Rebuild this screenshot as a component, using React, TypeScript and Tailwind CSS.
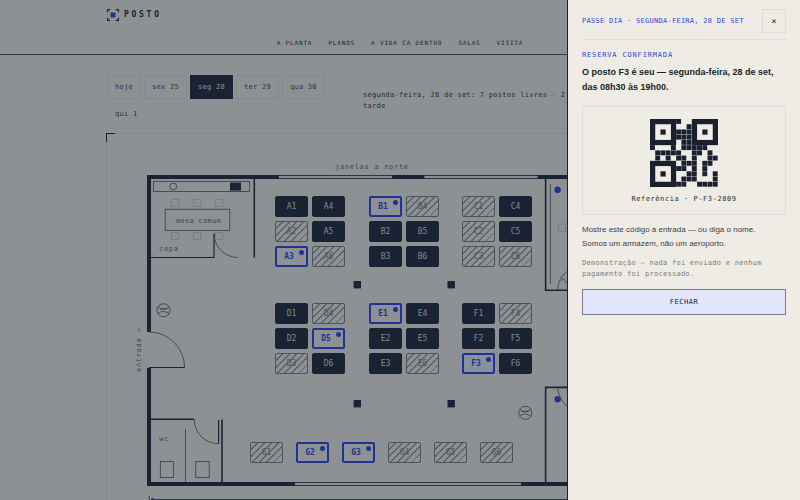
import React from "react";

type DeskState = "busy" | "free" | "partial";

const PLAN = { x: 107, y: 134, width: 586, height: 400 };

const days = ["hoje", "sex 25", "seg 28", "ter 29", "qua 30", "qui 1"];
const links = ["A PLANTA", "PLANOS", "A VIDA CÁ DENTRO", "SALAS", "VISITA"];

const free = ["A3", "B1", "D5", "E1", "F3", "G2", "G3"];
const partial = ["A2", "A6", "B4", "C1", "C2", "C3", "C6", "D3", "D4", "E6", "F4", "G1", "G4", "G5", "G6"];

const stateOf = (id: string): DeskState =>
  free.includes(id) ? "free" : partial.includes(id) ? "partial" : "busy";

const islands = [
  { name: "A", x: 275, y: 196 },
  { name: "B", x: 369, y: 196 },
  { name: "C", x: 462, y: 196 },
  { name: "D", x: 275, y: 303 },
  { name: "E", x: 369, y: 303 },
  { name: "F", x: 462, y: 303 },
];

const desks = [
  ...islands.flatMap((island) =>
    [0, 1, 2, 3, 4, 5].map((i) => ({
      id: `${island.name}${i + 1}`,
      x: island.x + (i > 2 ? 37 : 0),
      y: island.y + (i % 3) * 25,
    }))
  ),
  ...[0, 1, 2, 3, 4, 5].map((i) => ({ id: `G${i + 1}`, x: 250 + i * 46, y: 442 })),
];

const deskStyle: Record<DeskState, string> = {
  busy: "border bg-[#1a2338] border-[#1a2338] text-[#d9d9d6]",
  free: "border-2 border-[#2440e8] font-bold text-[#2440e8] pr-[5px]",
  partial:
    "border border-[#777a80] text-[#74777c] bg-[repeating-linear-gradient(135deg,transparent_0px,transparent_4px,#94979a_4px,#94979a_5px)]",
};

function Desk({ id, x, y }: { id: string; x: number; y: number }) {
  const state = stateOf(id);
  return (
    <button
      type="button"
      className={`absolute flex h-[21px] w-[33px] items-center justify-center rounded-[2px] text-[8px] leading-[9px] ${deskStyle[state]} ${id === "F3" ? "bg-[#e4e7fb]" : ""}`}
      style={{ left: x - PLAN.x, top: y - PLAN.y }}
    >
      {id}
      {state === "free" && <span className="absolute top-[2px] right-[2px] size-[5px] rounded-full bg-[#2440e8]" />}
    </button>
  );
}

function Plant({ x, y }: { x: number; y: number }) {
  return (
    <g transform={`translate(${x} ${y})`} stroke="#4a4e58" strokeWidth="0.8" fill="none">
      <circle r="6.6" />
      <path d="M-5.6 -3.4Q-3 -1 0 -1.2T5.6 -3.4M-5.6 3.4Q-3 1 0 1.2T5.6 3.4M-3.5 -1.4H3.5" />
    </g>
  );
}

function FloorPlan() {
  const ink = "#1a2338";
  return (
    <svg
      viewBox={`${PLAN.x} ${PLAN.y} ${PLAN.width} ${PLAN.height}`}
      width={PLAN.width}
      height={PLAN.height}
      fill="none"
      className="block"
      aria-hidden="true"
    >
      <path d="M149 332V177H690M149 368V484H690" stroke={ink} strokeWidth="4" />
      <g fill="#e4e2dc" stroke={ink} strokeWidth="0.7">
        <rect x="278.3" y="175.4" width="114" height="3.2" />
        <rect x="424" y="175.4" width="114" height="3.2" />
        <rect x="294.7" y="482.4" width="226.6" height="3.2" />
      </g>

      <g stroke={ink} strokeWidth="1.6">
        <path d="M254.3 178V257.5" />
        <path d="M151 257.5H214V233.5" strokeWidth="1.2" />
        <path d="M149 367.5H185" strokeWidth="1.2" />
        <path d="M151 419.3H194M222 419.5V483" />
        <path d="M218.6 420V443.7" strokeWidth="1.2" />
        <path d="M545.6 178V290.2H690M545.6 483V387.4H690" />
      </g>

      <g stroke="#4a4e58" strokeWidth="0.8">
        <path d="M214 234A24 24 0 0 0 238 257.5" />
        <path d="M149 332A35.5 35.5 0 0 1 184.6 367.5" />
        <path d="M194.3 419.5A24 24 0 0 0 218.5 443.6" />
        <rect x="153.5" y="181.4" width="96" height="10.2" />
        <circle cx="173.3" cy="186.5" r="3.4" />
        <rect x="165.2" y="209.2" width="64.6" height="21.2" />
        <path d="M185.5 429V482" />
        <rect x="160.3" y="461.6" width="13.2" height="16" />
        <rect x="195.8" y="461.6" width="13.4" height="16" />
        <path d="M550.4 184V284" />
        <path d="M557.6 290Q558 278 567 271.5M557.6 388Q559 400 568 407" />
        <path d="M561 281Q563 277 565 281T568 282" />
      </g>

      <g stroke="#bcbbb6" strokeWidth="0.7">
        {[171.3, 193.3, 215.3].map((x) => (
          <React.Fragment key={x}>
            <rect x={x} y="199.3" width="7.6" height="7" />
            <rect x={x} y="232.6" width="7.6" height="7" />
          </React.Fragment>
        ))}
        <rect x="558.6" y="224" width="7" height="7.6" />
      </g>

      <rect x="230" y="182.6" width="11" height="8" fill={ink} />
      <g fill={ink}>
        <rect x="353.6" y="281" width="7.4" height="7.4" />
        <rect x="447.5" y="281" width="7.4" height="7.4" />
        <rect x="353.6" y="400" width="7.4" height="7.4" />
        <rect x="447.5" y="400" width="7.4" height="7.4" />
      </g>
      <circle cx="557.6" cy="189.7" r="3.2" fill="#2440e8" />
      <circle cx="557.6" cy="399.3" r="3.2" fill="#2440e8" />

      <Plant x={163.5} y={310.3} />
      <Plant x={525.3} y={412.8} />

      <path d="M149.3 496V503M151 499.5H680M154 498L151 499.5L154 501" stroke={ink} strokeWidth="0.8" />

      <g fill="#5a5d66" className="text-[7px] tracking-widest">
        <text x="335" y="169">janelas a norte</text>
        <text x="159" y="251">copa</text>
        <text x="159" y="441">wc</text>
        <text x="176" y="223" className="tracking-[0.04em]">mesa comum</text>
        <text transform="translate(141 372) rotate(-90)">entrada →</text>
      </g>
    </svg>
  );
}

const qr = [
  "111111..11111",
  "1...1..11...1",
  "1.1.11111.1.1",
  "1...11111...1",
  "11111.1111111",
  "1...1.11111..",
  ".11111..11.1.",
  ".1.1.11.1..11",
  "11111.111.11.",
  "1...111.1.1..",
  "1.1.1..11.1.1",
  "1...1.111...1",
  "1111111..1111",
];

const finders = [
  [0, 0],
  [8, 0],
  [0, 8],
];

function QrCode() {
  return (
    <svg viewBox="0 0 13 13" className="size-[68px]" fill="#1a2030" role="img" aria-label="P-F3-2809">
      {qr.flatMap((row, y) =>
        [...row].map((cell, x) => {
          const finder = finders.some(([fx, fy]) => x >= fx && x < fx + 5 && y >= fy && y < fy + 5);
          if (cell !== "1" || finder) return null;
          return <rect key={`${x}-${y}`} x={x} y={y} width="0.94" height="0.94" />;
        })
      )}
      {finders.map(([x, y]) => (
        <g key={`${x}-${y}`}>
          <rect x={x + 0.5} y={y + 0.5} width="4" height="4" fill="#f3ece6" stroke="#1a2030" />
          <rect x={x + 2} y={y + 2} width="1" height="1" />
        </g>
      ))}
    </svg>
  );
}

function Drawer() {
  return (
    <aside
      role="dialog"
      aria-labelledby="pass-title"
      className="fixed inset-y-0 right-0 flex w-[233px] flex-col border-l border-[#1a2030] bg-[#efece5] px-3.5 pt-[9px]"
    >
      <header className="flex items-center justify-between border-b border-[#dedcd6] pb-1.5">
        <p className="font-[DejaVu_Sans_Mono,monospace] text-[7px] tracking-[0.04em] text-[#2f48e0]">
          PASSE DIA · SEGUNDA-FEIRA, 28 DE SET
        </p>
        <button type="button" className="size-6 border border-[#dedcd6] text-[9px] leading-none text-[#1a2030]">
          <span className="font-[DejaVu_Sans_Mono,monospace]">×</span>
        </button>
      </header>
      <p className="mt-2.5 font-[DejaVu_Sans_Mono,monospace] text-[7px] leading-[10px] tracking-[0.12em] text-[#2f48e0]">
        RESERVA CONFIRMADA
      </p>
      <h2 id="pass-title" className="mt-[5px] text-[9px] leading-[15px] font-bold text-[#1a1f2a]">
        O posto F3 é seu — segunda-feira, 28 de set,
        <br />
        das 08h30 às 19h00.
      </h2>
      <figure className="mt-[11px] flex flex-col items-center gap-[7px] border border-[#dedcd6] pt-3 pb-[10px]">
        <QrCode />
        <figcaption className="font-[DejaVu_Sans_Mono,monospace] text-[7px] leading-[10px] tracking-[0.08em] text-[#2c303a]">
          Referência · P-F3-2809
        </figcaption>
      </figure>
      <p className="mt-2 text-[8px] leading-[14px] text-[#3c4049]">
        Mostre este código à entrada — ou diga o nome.
        <br />
        Somos um armazém, não um aeroporto.
      </p>
      <p className="mt-[7px] font-[DejaVu_Sans_Mono,monospace] text-[7px] leading-[11px] tracking-[0.04em] text-[#777a80]">
        Demonstração — nada foi enviado e nenhum pagamento foi processado.
      </p>
      <button
        type="button"
        className="mt-[9px] h-[26px] border border-[#7a7f90] bg-[#e2e6fa] font-[DejaVu_Sans_Mono,monospace] text-[7px] tracking-[0.08em] text-[#1a2338]"
      >
        FECHAR
      </button>
    </aside>
  );
}

export default function App() {
  return (
    <div className="h-screen overflow-hidden bg-[#efece5] font-['Liberation_Sans',Arial,sans-serif]">
      <div className="font-[DejaVu_Sans_Mono,monospace] text-[#1a2030]">
        <header className="border-b border-[#4d5260] pt-2 pb-[7px]">
          <div className="mx-auto flex max-w-[586px] flex-col gap-4">
            <a href="#inicio" className="flex h-[14px] items-center gap-[5px] text-[8px] font-bold tracking-[0.34em]">
              <svg viewBox="0 0 12 12" className="size-3" fill="none" stroke="#1a2030" strokeWidth="1.2" aria-hidden="true">
                <path d="M.6 3.2V.6H3.2M8.8 .6H11.4V3.2M11.4 8.8V11.4H8.8M3.2 11.4H.6V8.8" />
                <rect x="3.6" y="3.6" width="4.8" height="4.8" fill="#2440e8" stroke="none" />
              </svg>
              POSTO
            </a>
            <nav className="flex justify-center gap-4 text-[6px] leading-[9px] tracking-[0.14em]">
              {links.map((link) => (
                <a key={link} href="#planta">
                  {link}
                </a>
              ))}
            </nav>
          </div>
        </header>

        <main className="mx-auto max-w-[586px] pt-5">
          <div className="grid grid-cols-[240px_1fr] items-center gap-4 text-[7px] leading-[11px] tracking-[0.04em]">
            <div className="flex flex-wrap gap-[3px]">
              {days.map((day) => (
                <button
                  key={day}
                  type="button"
                  className={`h-6 border px-[7px] ${
                    day === "seg 28"
                      ? "border-[#1a2338] bg-[#1a2338] text-[#efece5]"
                      : day === "qui 1"
                        ? "border-transparent text-[#3c4049]"
                        : "border-[#dedcd6] text-[#3c4049]"
                  }`}
                >
                  {day}
                </button>
              ))}
            </div>
            <p className="text-[#2c303a]">
              segunda-feira, 28 de set: 7 postos livres · 2
              <br />
              tarde
            </p>
          </div>

          <section className="relative mt-2 outline outline-[#dedcd6]">
            <span className="absolute -top-px -left-px size-[9px] border-t border-l border-[#1a2030]" />
            <FloorPlan />
            {desks.map((desk) => (
              <Desk key={desk.id} {...desk} />
            ))}
          </section>
        </main>
      </div>
      <div className="fixed inset-0 bg-[#19232f]/45" />
      <Drawer />
    </div>
  );
}
